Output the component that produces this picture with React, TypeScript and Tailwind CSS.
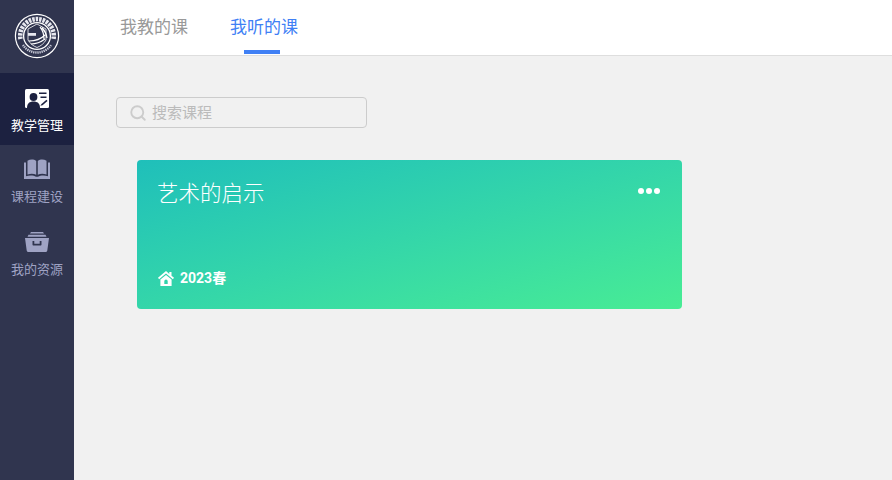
import React from "react";
import { Search } from "lucide-react";

const font = { fontFamily: '"Noto Sans CJK SC", sans-serif' };

function Logo() {
  return (
    <svg width="46" height="46" viewBox="0 0 46 46" fill="none">
      <circle cx="23" cy="23" r="22.200" fill="#fff" />
      <circle cx="23" cy="23" r="21" fill="#30354f" />
      {/* seal lettering, top heavy and bottom fine */}
      <path d="M6.500 26A16.800 16.800 0 1139.500 26" stroke="#e6e7ee" strokeWidth="4.600" strokeDasharray="2.500 1" />
      <path d="M9 32A16.800 16.800 0 0037 32" stroke="#c9cbd8" strokeWidth="2.400" strokeDasharray="1.300 .8" />
      <circle cx="23" cy="23" r="13.400" fill="#30354f" stroke="#fff" strokeWidth="1.300" />
      <path d="M23 11l9 5v11c-2 3.500-5.200 6-9 7.500-3.800-1.500-7-4-9-7.500V16z" stroke="#fff" strokeWidth=".8" />
      <rect x="14" y="20" width="8" height="2.800" fill="#e6e7ee" strokeDasharray="1 1" />
      <path d="M26 14c2.500 3 4 7 4 12M28 14.500c2.500 3 4.500 6.500 5 10.500M15 28c6 0 11-1 16-6M17 31c5 0 10-2 14-5" stroke="#fff" strokeWidth="1.200" />
    </svg>
  );
}

function CardIcon() {
  return (
    <svg width="24" height="19" viewBox="0 0 24 19">
      <rect width="24" height="19" rx="1.500" fill="#fff" />
      <circle cx="8.500" cy="8" r="3.900" fill="#1c2140" />
      <path d="M2 19c0-4.500 2.500-6.500 6.500-6.500S15 14.500 15 19z" fill="#1c2140" />
      <path d="M14 3.500h7.500v1.600H14zM15.500 7.500h6v1.600h-6z" fill="#1c2140" />
      <path d="M16.500 15l5-4.200 1 1.200-5 4.300-2.200.4z" fill="#1c2140" />
    </svg>
  );
}

function BookIcon() {
  return (
    <svg width="26" height="20" viewBox="0 0 26 20" fill="#9fa3c4">
      <path d="M3.500 1.800C6.200.2 9.800.2 12.200 2v13.800c-2.400-1.500-5.800-1.500-8.700-.3z" />
      <path d="M22.500 1.800C19.800.2 16.200.2 13.800 2v13.800c2.400-1.500 5.800-1.500 8.700-.3z" />
      <path d="M0 3.500h2v13.700c3.400-1 7.700-.9 10 .5h2c2.300-1.400 6.600-1.500 10-.5V3.500h2V20H0z" />
    </svg>
  );
}

function BoxIcon() {
  return (
    <svg width="24" height="20" viewBox="0 0 24 20" fill="#9fa3c4">
      <path d="M6 0h12l1 1.600H5z" />
      <path d="M3.500 2.800h17l1 2H2.500z" />
      <path d="M0 6h24l-1.700 12.500c-.1.900-.8 1.500-1.700 1.500H3.400c-.9 0-1.600-.6-1.700-1.500zM7.500 9v3.500c0 .6.400 1 1 1h7c.6 0 1-.4 1-1V9h-1.800v2.700H9.300V9z" fillRule="evenodd" />
    </svg>
  );
}

function HomeIcon() {
  return (
    <svg width="16" height="15" viewBox="0 0 16 15" fill="#fff">
      <path d="M8 0L0 6.800l1.100 1.500L8 2.600l6.900 5.700L16 6.800l-2.500-2.100V1h-2.200v1.900z" />
      <path d="M8 4L2.400 8.600V15h11.200V8.600zM8 8.500a1.700 1.700 0 011.700 1.700V13H6.300v-2.800A1.700 1.700 0 018 8.500z" fillRule="evenodd" />
    </svg>
  );
}

const navItems = [
  { label: "教学管理", icon: <CardIcon />, active: true },
  { label: "课程建设", icon: <BookIcon />, active: false },
  { label: "我的资源", icon: <BoxIcon />, active: false },
];

export default function App() {
  return (
    <div className="flex h-[480px] w-[892px] overflow-hidden bg-[#f1f1f1]" style={font}>
      {/* Sidebar */}
      <aside className="flex w-[74px] shrink-0 flex-col bg-[#30354f]">
        <div className="flex h-[73px] items-start justify-center pt-[13px]">
          <Logo />
        </div>
        {navItems.map((item) => (
          <div
            key={item.label}
            className={
              item.active
                ? "flex h-[72px] flex-col items-center bg-[#1c2140] pt-[14px] text-white"
                : "flex h-[73px] flex-col items-center pt-[13px] text-[#9fa3c4]"
            }
          >
            <div className="flex h-[22px] items-center justify-center">{item.icon}</div>
            <span className="mt-[7px] text-[13px] leading-[18px]">{item.label}</span>
          </div>
        ))}
      </aside>

      <div className="flex min-w-0 flex-1 flex-col">
        {/* Tabs */}
        <header className="flex h-14 items-start gap-[42px] border-b border-[#dedede] bg-white pl-[46px]">
          <div className="pt-[14px] text-[17px] leading-6 text-[#999]">我教的课</div>
          <div className="relative h-full pt-[14px] text-[17px] leading-6 text-[#4080f5]">
            我听的课
            <div className="absolute bottom-[1px] left-[14px] h-1 w-9 bg-[#4080f5]" />
          </div>
        </header>

        <main className="pl-[42px] pt-[41px]">
          {/* Search */}
          <div className="flex h-[31px] w-[251px] items-center gap-[5px] rounded border border-[#ccc] pl-[12px]">
            <Search size={18} strokeWidth={2.500} className="text-[#ccc]" />
            <span className="pb-[1px] text-[15px] leading-5 text-[#bbb]">搜索课程</span>
          </div>

          {/* Course card */}
          <div className="ml-[21px] mt-8 flex h-[149px] w-[545px] flex-col justify-between rounded bg-gradient-to-br from-[#1fbfba] to-[#48ec94] pb-[21px] pl-[21px] pr-[22px] pt-4 text-white">
            <div className="flex items-start justify-between">
              <span className="-ml-[1px] text-[21.500px] font-light leading-8">艺术的启示</span>
              <div className="mt-[12px] flex gap-[2px]">
                <span className="h-[6px] w-[6px] rounded-full bg-white" />
                <span className="h-[6px] w-[6px] rounded-full bg-white" />
                <span className="h-[6px] w-[6px] rounded-full bg-white" />
              </div>
            </div>
            <div className="flex items-center gap-[6px]">
              <HomeIcon />
              <span className="text-sm font-bold leading-5" style={{ fontFamily: 'Roboto, "Noto Sans CJK SC", sans-serif' }}>
                2023春
              </span>
            </div>
          </div>
        </main>
      </div>
    </div>
  );
}
